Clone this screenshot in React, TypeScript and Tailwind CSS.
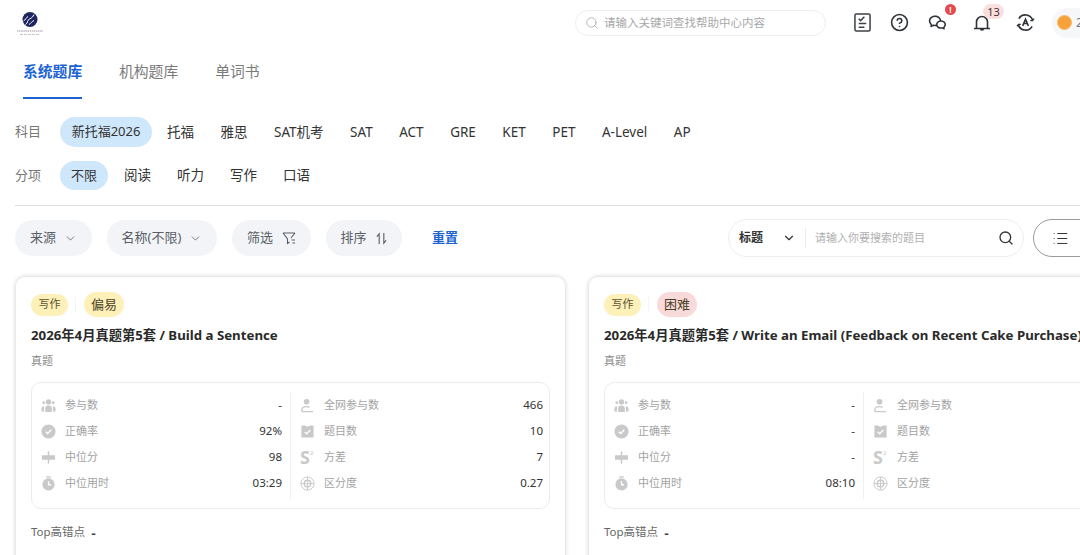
import React from "react";
import { ChevronDown, CircleHelp, List, Search } from "lucide-react";
import { RiWechatLine } from "react-icons/ri";

const font = { fontFamily: '"Noto Sans", "Noto Sans CJK SC", sans-serif' };

const subjects = ["托福", "雅思", "SAT机考", "SAT", "ACT", "GRE", "KET", "PET", "A-Level", "AP"];
const parts = ["阅读", "听力", "写作", "口语"];

const IconPeople = () => (
  <svg viewBox="0 0 16 16" className="w-[15px] h-[15px]" fill="#c9c9c9">
    <circle cx="8" cy="4.200" r="2.800" />
    <path d="M4.500 15v-4.200C4.500 8.800 6 8 8 8s3.500.8 3.500 2.800V15z" />
    <path d="M0.500 14.500v-3.300c0-1.500.8-2.300 2.800-2.500v5.800zM15.500 14.500v-3.300c0-1.500-.8-2.300-2.800-2.500v5.800z" />
    <circle cx="3" cy="5" r="1.500" />
    <circle cx="13" cy="5" r="1.500" />
  </svg>
);

const IconCheck = () => (
  <svg viewBox="0 0 16 16" className="w-[15px] h-[15px]">
    <circle cx="8" cy="8" r="7.500" fill="#c9c9c9" />
    <path d="M5 8.200l2.100 2 3.900-4" fill="none" stroke="#fff" strokeWidth="1.500" />
  </svg>
);

const IconMedian = () => (
  <svg viewBox="0 0 16 16" className="w-[15px] h-[15px]" fill="#c9c9c9">
    <rect x="1" y="5.500" width="14" height="5" rx="0.500" />
    <rect x="7.200" y="1.500" width="1.600" height="13" />
  </svg>
);

const IconTimer = () => (
  <svg viewBox="0 0 16 16" className="w-[15px] h-[15px]">
    <rect x="5.500" y="0.300" width="5" height="1.400" fill="#c9c9c9" />
    <circle cx="8" cy="9" r="6.500" fill="#c9c9c9" />
    <path d="M8 5.500V9.300h2.800" fill="none" stroke="#fff" strokeWidth="1.400" />
  </svg>
);

const IconUser = () => (
  <svg viewBox="0 0 16 16" className="w-[15px] h-[15px]" fill="none">
    <circle cx="7" cy="4" r="3" fill="#c9c9c9" />
    <path d="M2 14.500v-2c0-2 2-3.300 5-3.300 1.300 0 2.400.2 3.300.7M2 14.500h12" stroke="#c9c9c9" strokeWidth="1.500" />
  </svg>
);

const IconBox = () => (
  <svg viewBox="0 0 16 16" className="w-[15px] h-[15px]">
    <path d="M1.500 1.500h3.500l3 1.500 3-1.500h3.500v13h-13z" fill="#c9c9c9" />
    <path d="M5 8.500l2.200 2 3.800-4" fill="none" stroke="#fff" strokeWidth="1.500" />
  </svg>
);

const IconVariance = () => (
  <span className="w-[15px] h-[15px] flex items-center text-[18px] font-bold leading-none text-[#c9c9c9]">
    S<span className="text-[6px] font-normal self-start">2</span>
  </span>
);

const IconTarget = () => (
  <svg viewBox="0 0 16 16" className="w-[15px] h-[15px]" fill="none" stroke="#c9c9c9">
    <circle cx="8" cy="8" r="7" />
    <circle cx="8" cy="8" r="3.500" strokeWidth="1.500" />
    <path d="M8 1v14M1 8h14" />
  </svg>
);

const Stat = ({ icon, label, value }: { icon: React.ReactNode; label: string; value: string }) => (
  <div className="h-[26px] flex items-center">
    <span className="w-[24px] shrink-0 flex justify-start">{icon}</span>
    <span className="flex-1 text-[11px] text-[#a3a3a3]">{label}</span>
    <span className="text-[11.500px] text-[#333]">{value}</span>
  </div>
);

const Card = ({
  level,
  levelClass,
  title,
  values,
}: {
  level: string;
  levelClass: string;
  title: string;
  values: string[];
}) => (
  <div className="w-[551px] shrink-0 h-[300px] rounded-t-[10px] border border-[#e8e8e8] shadow-[0_0_4px_rgba(0,0,0,0.14)] px-[15px] pt-[15px]">
    <div className="flex items-center h-[25px]">
      <span className="w-[37px] h-[22px] rounded-full bg-[#fdf0b8] text-[11px] text-[#5c5330] flex items-center justify-center">写作</span>
      <span className="w-px h-[16px] bg-[#f4f4f4] ml-[7px] mr-[8px]" />
      <span className={`h-[25px] px-[7px] rounded-full text-[13px] text-[#4a4026] flex items-center ${levelClass}`}>{level}</span>
    </div>
    <div className="mt-[7px] text-[13.250px] leading-[22px] font-bold text-[#2a2a2a] whitespace-nowrap">{title}</div>
    <div className="mt-[5px] text-[11px] leading-[20px] text-[#8c8c8c]">真题</div>
    <div className="mt-[11px] w-[519px] h-[127px] rounded-[10px] border border-[#ececec] py-[9px] flex">
      <div className="w-[259px] pl-[9px] pr-[8px] border-r border-[#f0f0f0]">
        <Stat icon={<IconPeople />} label="参与数" value={values[0]} />
        <Stat icon={<IconCheck />} label="正确率" value={values[1]} />
        <Stat icon={<IconMedian />} label="中位分" value={values[2]} />
        <Stat icon={<IconTimer />} label="中位用时" value={values[3]} />
      </div>
      <div className="flex-1 pl-[9px] pr-[6px]">
        <Stat icon={<IconUser />} label="全网参与数" value={values[4]} />
        <Stat icon={<IconBox />} label="题目数" value={values[5]} />
        <Stat icon={<IconVariance />} label="方差" value={values[6]} />
        <Stat icon={<IconTarget />} label="区分度" value={values[7]} />
      </div>
    </div>
    <div className="mt-[13px] flex items-center h-[20px] text-[11.500px] text-[#666]">
      Top高错点<span className="ml-[6px] text-[14px] font-semibold text-[#444]">-</span>
    </div>
  </div>
);

const FilterPill = ({ label, width, gap, icon }: { label: string; width: string; gap: string; icon: React.ReactNode }) => (
  <div className={`${width} ${gap} h-[36px] rounded-full bg-[#f2f4f8] flex items-center justify-center text-[13px] text-[#5a5f66]`}>
    <span>{label}</span>
    {icon}
  </div>
);

export default function App() {
  return (
    <div style={font} className="w-[1080px] h-[555px] overflow-hidden bg-white">
      <header className="h-[45px] flex items-center">
        <div className="ml-[17px] w-[26px] shrink-0 mt-[3px] flex justify-center">
          <svg viewBox="0 0 26 24" className="w-[26px] h-[24px]">
            <circle cx="13" cy="7.500" r="7.500" fill="#1f2560" />
            <path d="M8.500 12.500c3-1.500 1-4 4-5.500s3-2 4.500-4.500M6.500 9c2-1 2.500-3.500 4.500-4.500M12 12.500c2-1 2-2.500 5-4" fill="none" stroke="#fff" strokeWidth="1" />
            <path d="M0 19h26" stroke="#9a9aa5" strokeWidth="1" strokeDasharray="1.500 0.600" />
            <path d="M3 22.500h20" stroke="#b5b5bd" strokeWidth="0.800" strokeDasharray="3 1" />
          </svg>
        </div>
        <div className="ml-[532px] w-[251px] shrink-0 h-[26px] rounded-full border border-[#eeeeee] flex items-center pl-[9px] gap-[5px]">
          <Search size={14} strokeWidth={1.200} className="text-[#9a9a9a]" />
          <span className="text-[11.500px] text-[#a8a8a8]">请输入关键词查找帮助中心内容</span>
        </div>
        <div className="ml-[28px] flex items-center shrink-0">
          <svg viewBox="0 0 18 20" className="w-[17px] h-[19px]" fill="none" stroke="#3c4048" strokeWidth="1.600">
            <rect x="1" y="1" width="16" height="18" rx="1.500" />
            <path d="M5 6l2 2 4-4M5 11h8M5 15h6" />
          </svg>
          <CircleHelp size={19} strokeWidth={2} className="ml-[19px] text-[#2f3338]" />
          <span className="relative ml-[19px]">
            <RiWechatLine size={19} className="text-[#2f3338] block" />
            <span className="absolute -top-[9px] left-[17px] w-[11px] h-[11px] rounded-full bg-[#e5484d] text-white text-[8px] leading-[11px] text-center font-bold">!</span>
          </span>
          <span className="relative ml-[26px]">
            <svg viewBox="0 0 18 18" className="w-[18px] h-[18px] block" fill="none" stroke="#2f3338" strokeWidth="1.600">
              <path d="M3.500 14.500V8a5.500 5.500 0 0 1 11 0v6.500M1 14.500h16M7.500 14.500c0 2 3 2 3 0" />
            </svg>
            <span className="absolute -top-[10px] left-[10px] w-[21px] h-[15px] rounded-full bg-[#f9dfdf] text-[#4a3030] text-[11px] leading-[15px] text-center">13</span>
          </span>
          <svg viewBox="0 0 20 20" className="ml-[25px] w-[19px] h-[19px]" fill="none" stroke="#2f3338" strokeWidth="1.700">
            <path d="M3 6A8 8 0 0 1 17.500 7.500M17 14A8 8 0 0 1 2.500 12.500" />
            <path d="M15 8l2.500 0 1.500-2M5 12H2.500L1 14" strokeWidth="1.300" />
            <path d="M7 13.500l3-7 3 7M8 11h4" />
          </svg>
          <div className="ml-[17px] w-[40px] h-[30px] rounded-l-full bg-[#f6f7f9] flex items-center pl-[5px] gap-[4px]">
            <span className="w-[15px] h-[15px] shrink-0 rounded-full bg-[#f6a13a] border border-[#f9bb6b]" />
            <span className="text-[12px] text-[#777]">2</span>
          </div>
        </div>
      </header>

      <nav className="h-[54px] ml-[23px] flex gap-[37px] pt-[15px] text-[14.800px] text-[#7b7b7b]">
        <div className="w-[59px] h-[39px] border-b-[2.500px] border-[#1a63d0] font-bold text-[#1a63d0] whitespace-nowrap">系统题库</div>
        <div className="whitespace-nowrap">机构题库</div>
        <div className="whitespace-nowrap">单词书</div>
      </nav>

      <div className="mx-[15px] mt-[18px] h-[30px] flex items-center text-[13px] text-[#333]">
        <span className="w-[45px] text-[#777]">科目</span>
        <span className="w-[92px] h-[30px] rounded-full bg-[#cfe7fb] flex items-center justify-center">新托福2026</span>
        <div className="ml-[15px] flex gap-[26.500px] text-[13.500px]">
          {subjects.map((s) => (
            <span key={s}>{s}</span>
          ))}
        </div>
      </div>

      <div className="mx-[15px] mt-[14px] h-[29px] flex items-center text-[13px] text-[#333]">
        <span className="w-[45px] text-[#777]">分项</span>
        <span className="w-[48px] h-[29px] rounded-full bg-[#cfe7fb] flex items-center justify-center">不限</span>
        <div className="ml-[16px] flex gap-[26px] text-[13.500px]">
          {parts.map((s) => (
            <span key={s}>{s}</span>
          ))}
        </div>
      </div>

      <div className="ml-[15px] mt-[15px] h-px bg-[#dedede]" />

      <div className="ml-[15px] mt-[13px] h-[38px] flex items-center">
        <div className="flex gap-[15px] shrink-0">
          <FilterPill label="来源" width="w-[77px]" gap="gap-[8px]" icon={<ChevronDown size={13} strokeWidth={1.500} />} />
          <FilterPill label="名称(不限)" width="w-[110px]" gap="gap-[8px]" icon={<ChevronDown size={13} strokeWidth={1.500} />} />
          <FilterPill
            label="筛选"
            width="w-[79px]"
            gap="gap-[9px]"
            icon={
              <svg viewBox="0 0 14 14" className="w-[14px] h-[14px]" fill="none" stroke="#5a5f66" strokeWidth="1.100">
                <path d="M1 2h12M1 2l4.500 6v4.500l2-1.500M13 2L9 7M9.500 9H13M10.500 12H13" />
              </svg>
            }
          />
          <FilterPill
            label="排序"
            width="w-[76px]"
            gap="gap-[8px]"
            icon={
              <svg viewBox="0 0 14 14" className="w-[13px] h-[13px]" fill="none" stroke="#5a5f66" strokeWidth="1.200">
                <path d="M4.500 13V2L2 5M9.500 1v11l2.500-3" />
              </svg>
            }
          />
        </div>
        <span className="ml-[30px] shrink-0 whitespace-nowrap text-[13px] font-semibold text-[#1a63d0]">重置</span>
        <div className="ml-[270px] w-[296px] h-[38px] shrink-0 rounded-full border border-[#eeeeee] flex items-center pl-[10px] pr-[9px]">
          <span className="text-[12px] font-bold text-[#333] w-[43px]">标题</span>
          <ChevronDown size={14} strokeWidth={2} className="text-[#333]" />
          <span className="w-px h-[20px] bg-[#ececec] ml-[9px]" />
          <span className="ml-[9px] flex-1 text-[11px] text-[#b0b0b0]">请输入你要搜索的题目</span>
          <Search size={16} strokeWidth={2} className="text-[#333]" />
        </div>
        <div className="ml-[9px] w-[60px] h-[38px] shrink-0 rounded-l-full border border-[#9a9a9a] flex items-center pl-[18px]">
          <List size={17} strokeWidth={1.400} className="text-[#333]" />
        </div>
      </div>

      <div className="ml-[15px] mt-[19px] flex gap-[22px]">
        <Card
          level="偏易"
          levelClass="bg-[#fdf0b8]"
          title="2026年4月真题第5套 / Build a Sentence"
          values={["-", "92%", "98", "03:29", "466", "10", "7", "0.27"]}
        />
        <Card
          level="困难"
          levelClass="bg-[#f9dada]"
          title="2026年4月真题第5套 / Write an Email (Feedback on Recent Cake Purchase)"
          values={["-", "-", "-", "08:10", "-", "-", "-", "-"]}
        />
      </div>
    </div>
  );
}
